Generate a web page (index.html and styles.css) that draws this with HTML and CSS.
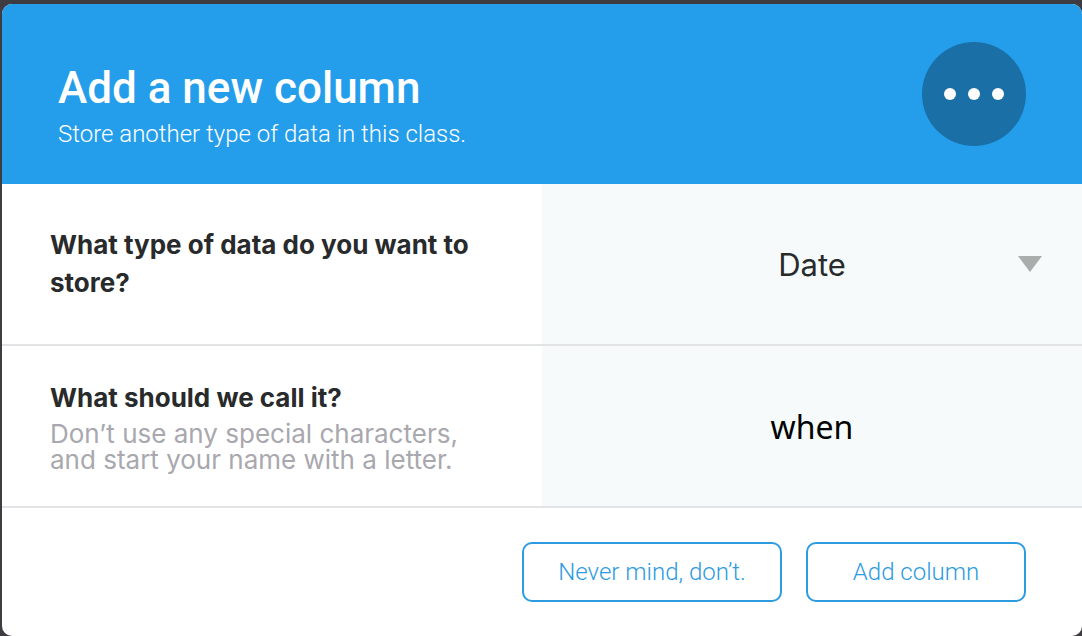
FILE: index.html
```html
<!DOCTYPE html>
<html lang="en">
<head>
  <meta charset="UTF-8" />
  <meta name="viewport" content="width=device-width, initial-scale=1.0" />
  <title>Add a new column</title>
  <link rel="stylesheet" href="styles.css">
</head>
<body>

  <form class="modal">
    <div class="modal-header">
      <div class="modal-heading">
        <h1 class="modal-title">Add a new column</h1>
        <p class="modal-subtitle">Store another type of data in this class.</p>
      </div>
      <svg class="modal-icon" viewBox="0 0 104 104" aria-hidden="true">
        <circle cx="52" cy="52" r="52" fill="#1a6fa6" />
        <circle cx="28" cy="52" r="6" fill="#fff" />
        <circle cx="52" cy="52" r="6" fill="#fff" />
        <circle cx="76" cy="52" r="6" fill="#fff" />
      </svg>
    </div>

    <div class="field">
      <div class="field-label">
        <label class="label-text" for="columnType">What type of data do you want to store?</label>
      </div>
      <div class="field-input">
        <select class="select" id="columnType">
          <option selected>Date</option>
        </select>
        <span class="arrow"></span>
      </div>
    </div>

    <div class="field">
      <div class="field-label">
        <label class="label-text" for="columnName">What should we call it?</label>
        <p class="description" id="nameHelp">Don’t use any special characters, and start your name with a letter.</p>
      </div>
      <div class="field-input">
        <input class="text-input" type="text" id="columnName" value="when" aria-describedby="nameHelp">
      </div>
    </div>

    <div class="modal-footer">
      <button class="btn btn-cancel" type="button">Never mind, don’t.</button>
      <button class="btn" type="submit">Add column</button>
    </div>
  </form>

</body>
</html>
```
FILE: styles.css
```css
* {
  box-sizing: border-box;
}
body {
  font-family: Inter, sans-serif;
  background-color: #3f3c41;
  margin: 0;
  padding: 4px 0 0 2px;
}
.modal {
  background-color: #fff;
  border-radius: 10px;
  overflow: hidden;
}
.modal-header {
  display: flex;
  justify-content: space-between;
  align-items: center;
  min-height: 180px;
  padding: 0 56px;
  background-color: #249deb;
  color: #fff;
}
.modal-heading {
  padding-top: 28px;
}
.modal-title {
  margin: 0;
  font-family: Roboto, sans-serif;
  font-size: 44px;
  font-weight: 500;
  line-height: 52px;
}
.modal-subtitle {
  margin: 0;
  font-family: Roboto, sans-serif;
  font-size: 24px;
  font-weight: 300;
  line-height: 40px;
}
.modal-icon {
  width: 104px;
  height: 104px;
  flex: none;
}
.field {
  display: grid;
  grid-template-columns: 1fr 1fr;
  min-height: 162px;
  border-bottom: 2px solid #e1e3e4;
}
.field-label {
  display: flex;
  flex-direction: column;
  justify-content: center;
  padding: 0 48px;
}
.label-text {
  color: #282a2b;
  font-size: 26px;
  font-weight: 700;
  line-height: 38px;
}
.description {
  margin: 4px 0 0;
  color: #a8a8ae;
  font-size: 26px;
  line-height: 26px;
}
.field-input {
  position: relative;
  display: flex;
  background-color: #f6fafb;
}
.select,
.text-input {
  width: 100%;
  border: none;
  outline: none;
  background: none;
  appearance: none;
  font-size: 32px;
  text-align: center;
}
.select {
  color: #282a2b;
  font-family: Inter, sans-serif;
  font-size: 31px;
  text-align-last: center;
  cursor: pointer;
}
.text-input {
  color: #000;
  font-family: "Noto Sans", sans-serif;
}
.arrow {
  position: absolute;
  top: 50%;
  right: 40px;
  margin-top: -8px;
  border: 12px solid transparent;
  border-top: 16px solid #a9adac;
  border-bottom: none;
  pointer-events: none;
}
.modal-footer {
  display: flex;
  justify-content: flex-end;
  gap: 24px;
  padding: 34px 56px;
}
.btn {
  min-width: 220px;
  height: 60px;
  padding: 0 24px;
  border: 2px solid #2d9be0;
  border-radius: 10px;
  background-color: #fff;
  color: #2d9be0;
  font-family: Roboto, sans-serif;
  font-size: 24px;
  font-weight: 300;
  cursor: pointer;
}
.btn-cancel {
  min-width: 260px;
}
```
